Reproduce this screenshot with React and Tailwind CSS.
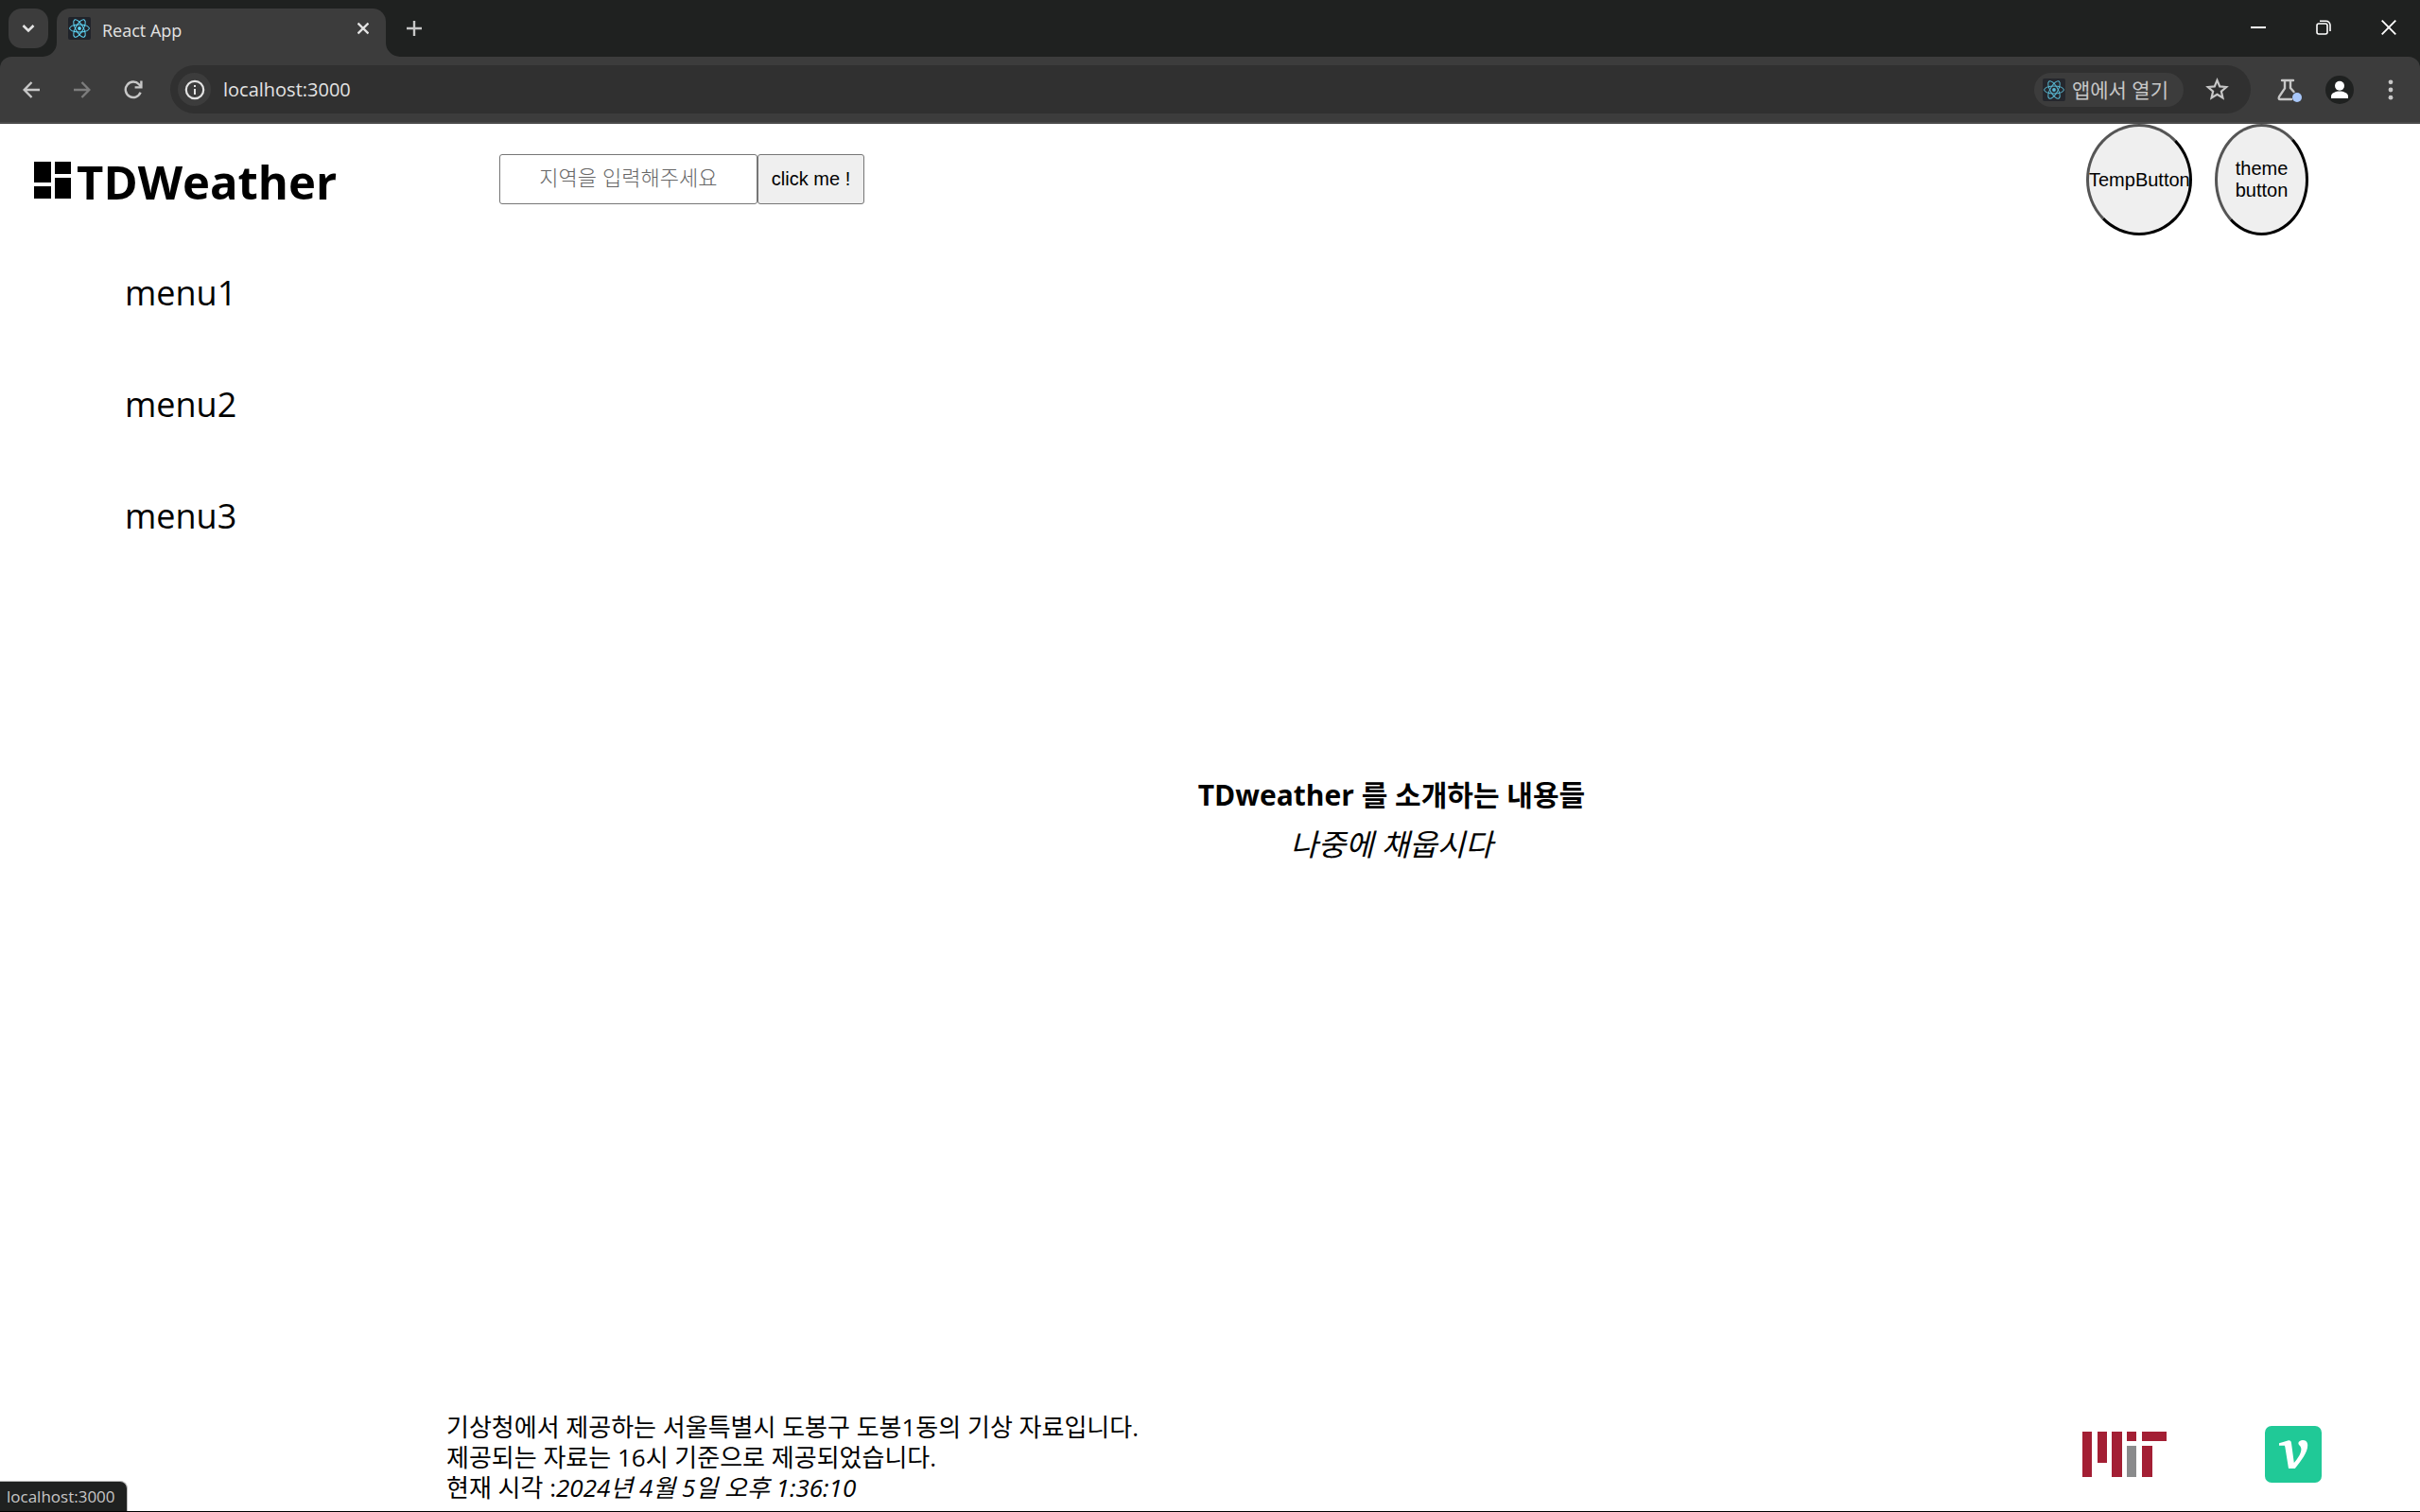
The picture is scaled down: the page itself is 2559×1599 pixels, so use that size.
function ReactMark({ className, size = 24 }) {
  return (
    <svg className={className} width={size} height={size} viewBox="0 0 24 24" aria-hidden="true">
      <rect width="24" height="24" rx="2" fill="#20232a" />
      <g fill="none" stroke="#61dafb" strokeWidth="1">
        <ellipse cx="12" cy="12" rx="10.4" ry="4" />
        <ellipse cx="12" cy="12" rx="10.4" ry="4" transform="rotate(60 12 12)" />
        <ellipse cx="12" cy="12" rx="10.4" ry="4" transform="rotate(120 12 12)" />
      </g>
      <circle cx="12" cy="12" r="1.9" fill="#61dafb" />
    </svg>
  );
}

function TabStrip() {
  return (
    <div className="flex h-[60px] items-start bg-[#1f2120] pl-[9px] pt-[9px]">
      <button aria-label="Search tabs" className="flex size-[42px] items-center justify-center rounded-[14px] bg-[#3c3c3c]">
        <svg width="14" height="10" viewBox="0 0 14 10" fill="none" stroke="#e3e3e3" strokeWidth="2.6" aria-hidden="true">
          <path d="M1.5 2 7 7.5 12.5 2" />
        </svg>
      </button>
      <div className="relative ml-[9px] flex h-[51px] w-[348px] items-start rounded-t-[14px] bg-[#3c3c3c] pl-3 pr-[17px]">
        <svg className="absolute bottom-0 -left-[15px]" width="15" height="15" viewBox="0 0 15 15" aria-hidden="true">
          <path d="M15 0v15H0A15 15 0 0 0 15 0Z" fill="#3c3c3c" />
        </svg>
        <svg className="absolute bottom-0 -right-[15px]" width="15" height="15" viewBox="0 0 15 15" aria-hidden="true">
          <path d="M0 0v15h15A15 15 0 0 1 0 0Z" fill="#3c3c3c" />
        </svg>
        <ReactMark className="mt-[9px]" />
        <span className="ml-3 mt-[11px] text-[18px] leading-[24px] text-[#e3e3e3]">React App</span>
        <button aria-label="Close tab" className="ml-auto mt-[13px] p-px">
          <svg width="12" height="14" viewBox="0 0 12 14" fill="none" stroke="#e3e3e3" strokeWidth="2.4" aria-hidden="true">
            <path d="M.5 1.5 11.5 12.5M11.5 1.5.5 12.5" />
          </svg>
        </button>
      </div>
      <button aria-label="New tab" className="ml-[22px] mt-[13px]">
        <svg width="16" height="16" viewBox="0 0 16 16" fill="none" stroke="#c7c7c7" strokeWidth="2.4" aria-hidden="true">
          <path d="M8 0v16M0 8h16" />
        </svg>
      </button>
      <div className="ml-auto flex items-center gap-[53px] pr-[25px] pt-3">
        <button aria-label="Minimize">
          <svg width="16" height="16" viewBox="0 0 16 16" aria-hidden="true">
            <path d="M0 7h16v2H0z" fill="#fff" />
          </svg>
        </button>
        <button aria-label="Restore">
          <svg width="16" height="16" viewBox="0 0 16 16" fill="none" stroke="#fff" strokeWidth="1.6" aria-hidden="true">
            <rect x="1" y="4" width="11" height="11" rx="2" />
            <path d="M4 1.2h6.5A4.4 4.4 0 0 1 15 5.6V12" />
          </svg>
        </button>
        <button aria-label="Close">
          <svg width="16" height="16" viewBox="0 0 16 16" fill="none" stroke="#fff" strokeWidth="1.8" aria-hidden="true">
            <path d="M.7.7 15.3 15.3M15.3.7.7 15.3" />
          </svg>
        </button>
      </div>
    </div>
  );
}

function Toolbar() {
  return (
    <div className="bg-[#1f2120]">
      <div className="flex h-[71px] items-center rounded-t-[12px] border-b-2 border-[#4a4a4a] bg-[#3c3c3c] pl-6 pr-7">
        <button aria-label="Back">
          <svg width="18" height="18" viewBox="0 0 18 18" fill="none" stroke="#c7c7c7" strokeWidth="2.4" aria-hidden="true">
            <path d="M18 9H2M9.5 1 1.7 9l7.8 8" />
          </svg>
        </button>
        <button aria-label="Forward" className="ml-9" disabled>
          <svg width="18" height="18" viewBox="0 0 18 18" fill="none" stroke="#7d7d7d" strokeWidth="2.4" aria-hidden="true">
            <path d="M0 9h16M8.5 1l7.8 8-7.8 8" />
          </svg>
        </button>
        <button aria-label="Reload" className="ml-[35px]">
          <svg width="20" height="20" viewBox="0 0 20 20" aria-hidden="true">
            <path d="M17.6 12.8A8.2 8.2 0 1 1 16 4.2L18 6.5" fill="none" stroke="#c7c7c7" strokeWidth="2.4" />
            <path d="M19.6.6v8h-8V6.2h5.6V.6z" fill="#c7c7c7" />
          </svg>
        </button>
        <div className="ml-[29px] flex h-[51px] min-w-0 flex-1 items-center rounded-full bg-[#303030] pl-2 pr-[23px]">
          <button aria-label="View site information" className="flex size-[35px] shrink-0 items-center justify-center rounded-full bg-[#3c3c3c]">
            <svg width="22" height="22" viewBox="0 0 22 22" aria-hidden="true">
              <circle cx="11" cy="11" r="9.2" fill="none" stroke="#e3e3e3" strokeWidth="2.2" />
              <path d="M10 10h2v6h-2zM10 6h2v2h-2z" fill="#e3e3e3" />
            </svg>
          </button>
          <input aria-label="Address" defaultValue="localhost:3000" className="ml-[13px] min-w-0 flex-1 bg-transparent text-[20px] leading-[28px] text-[#e3e3e3] outline-none" />
          <button className="flex h-9 items-center rounded-full bg-[#3c3c3c] pl-[9px] pr-4 text-[21px] leading-[28px] text-[#c7c7c7]">
            <ReactMark className="mr-[7px] opacity-80" />
            앱에서 열기
          </button>
          <button aria-label="Bookmark this tab" className="ml-[23px]">
            <svg width="25" height="25" viewBox="0 0 24 24" fill="none" stroke="#c7c7c7" strokeWidth="2.1" aria-hidden="true">
              <path d="m12 2.8 2.6 6.2 6.7.6-5.1 4.4 1.5 6.6L12 17.1l-5.7 3.5 1.5-6.6-5.1-4.4 6.7-.6z" />
            </svg>
          </button>
        </div>
        <button aria-label="Experiments" className="ml-7">
          <svg width="26" height="26" viewBox="0 0 26 26" aria-hidden="true">
            <path d="M5 3h12M8 3v8.5L2.2 20q-1.4 3 1 3H15M14 3v8l3.5 4" fill="none" stroke="#c7c7c7" strokeWidth="2.4" strokeLinecap="round" />
            <circle cx="21" cy="21" r="5" fill="#a8c7fa" />
          </svg>
        </button>
        <button aria-label="Profile" className="ml-[25px]">
          <svg width="30" height="30" viewBox="0 0 30 30" aria-hidden="true">
            <circle cx="15" cy="15" r="15" fill="#1f2120" />
            <circle cx="15" cy="10.8" r="5" fill="#fff" />
            <path d="M6 24v-2.5c0-3 5-5 9-5s9 2 9 5V24z" fill="#fff" />
          </svg>
        </button>
        <button aria-label="Menu" className="ml-9">
          <svg width="6" height="22" viewBox="0 0 6 22" fill="#c7c7c7" aria-hidden="true">
            <circle cx="3" cy="2.8" r="2.4" />
            <circle cx="3" cy="11" r="2.4" />
            <circle cx="3" cy="19.2" r="2.4" />
          </svg>
        </button>
      </div>
    </div>
  );
}

function Header() {
  return (
    <header className="flex h-[118px] items-center">
      <a href="#home" className="flex w-[15%] min-w-max items-center gap-[6px] pl-9">
        <svg width="39" height="39" viewBox="0 0 39 39" aria-hidden="true">
          <path d="M0 0h18v22H0zM0 26h18v13H0zM22 0h17v13H22zM22 17h17v22H22z" />
        </svg>
        <span className="pt-1 text-[49px] font-bold leading-[60px]">TDWeather</span>
      </a>
      <form className="ml-36 flex pb-[2px] font-['Liberation_Sans','Noto_Sans_CJK_KR',sans-serif]" onSubmit={(e) => e.preventDefault()}>
        <input
          aria-label="지역"
          placeholder="지역을 입력해주세요"
          className="h-[53px] w-[273px] rounded-[3px] border border-[#767676] text-center text-[22px] leading-[28px] placeholder:font-light placeholder:text-[#666]"
        />
        <button className="h-[53px] rounded-[3px] border border-[#767676] bg-[#efefef] px-[14px] text-[20px] leading-[24px]">click me !</button>
      </form>
      <div className="ml-auto flex gap-6 pr-[118px] font-['Liberation_Sans',sans-serif] text-[20px] leading-[23px]">
        <button className="h-[118px] w-[112px] rounded-[50%] border-[3px] border-b-black border-l-[#555] border-r-black border-t-[#555] bg-[#efefef]">TempButton</button>
        <button className="h-[118px] w-[99px] rounded-[50%] border-[3px] border-b-black border-l-[#555] border-r-black border-t-[#555] bg-[#efefef]">theme button</button>
      </div>
    </header>
  );
}

function Footer() {
  return (
    <footer className="flex h-[118px] items-center justify-between pl-[472px] pr-[104px]">
      <div className="pt-1 text-[26px] leading-[32px]">
        <p>기상청에서 제공하는 서울특별시 도봉구 도봉1동의 기상 자료입니다.</p>
        <p>제공되는 자료는 16시 기준으로 제공되었습니다.</p>
        <p>현재 시각 :<em>2024년 4월 5일 오후 1:36:10</em></p>
      </div>
      <div className="flex items-center gap-[104px] pb-[2px]">
        <a href="#mit" aria-label="MIT">
          <svg width="89" height="48" viewBox="0 0 89 48" aria-hidden="true">
            <path d="M0 0h10v48H0zM16 0h10v33H16zM31 0h11v48H31zM47 0h10v10H47zM63 0h26v10H63zM63 15h11v33H63z" fill="#a31f34" />
            <path d="M47 15h10v33H47z" fill="#8a8b8c" />
          </svg>
        </a>
        <a href="#velog" aria-label="velog">
          <svg width="60" height="60" viewBox="0 0 60 60" aria-hidden="true">
            <rect width="60" height="60" rx="7" fill="#20c997" />
            <path d="M15 18.3 25 15.3c1.7-.2 2.8.6 3 2.9L30.8 39c4-4.5 7.6-10 7.6-14.5 0-3.4-3-4.4-3-6.1 0-1.8 2-3.4 4.6-3.4 3.6 0 5.2 2.2 5.2 5.6 0 7.8-7.2 16.6-13.4 24.4H25L21.3 22l-.4-1.3L15 20.8Z" fill="#fff" />
          </svg>
        </a>
      </div>
    </footer>
  );
}

export default function App() {
  return (
    <div className="relative flex min-h-screen flex-col border-b border-black bg-white text-black font-['Open_Sans','Noto_Sans_CJK_KR',sans-serif]">
      <TabStrip />
      <Toolbar />
      <Header />
      <div className="flex flex-1">
        <nav className="flex w-[15%] flex-col pl-[132px] pt-[2px] text-[36px]">
          <a href="#menu1" className="leading-[118px]">menu1</a>
          <a href="#menu2" className="leading-[118px]">menu2</a>
          <a href="#menu3" className="leading-[118px]">menu3</a>
        </nav>
        <main className="flex flex-1 flex-col items-center justify-center pt-1 leading-[52px]">
          <h1 className="text-[30px] font-bold">TDweather 를 소개하는 내용들</h1>
          <p className="text-[32px] italic">나중에 채웁시다</p>
        </main>
      </div>
      <Footer />
      <div className="absolute bottom-0 left-0 h-8 rounded-tr-[8px] border-r border-t border-[#b8b8b8] bg-[#1f2120] pl-[7px] pr-3 text-[17px] leading-[32px] text-[#c7c7c7]">localhost:3000</div>
    </div>
  );
}
